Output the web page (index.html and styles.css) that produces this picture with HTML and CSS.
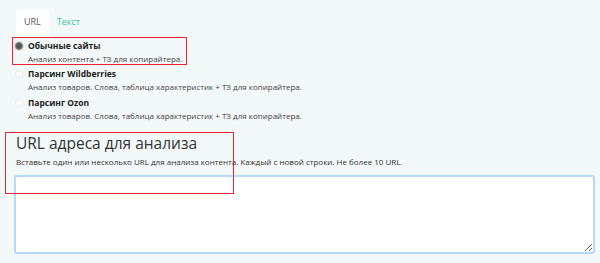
FILE: index.html
```html
<!DOCTYPE html>
<html lang="ru">

<head>
    <meta charset="UTF-8">
    <meta name="viewport" content="width=device-width, initial-scale=1.0">
    <title>Анализ</title>
    <link rel="stylesheet" href="styles.css">
</head>

<body>
    <div class="panel">
        <div class="tabs">
            <span class="tab active">URL</span>
            <span class="tab">Текст</span>
        </div>

        <div class="modes">
            <label class="mode marked">
                <span class="radio checked"></span>
                <span class="mode-text">
                    <b>Обычные сайты</b>
                    <small>Анализ контента + ТЗ для копирайтера.</small>
                </span>
            </label>
            <label class="mode">
                <span class="radio"></span>
                <span class="mode-text">
                    <b>Парсинг Wildberries</b>
                    <small>Анализ товаров. Слова, таблица характеристик + ТЗ для копирайтера.</small>
                </span>
            </label>
            <label class="mode">
                <span class="radio"></span>
                <span class="mode-text">
                    <b>Парсинг Ozon</b>
                    <small>Анализ товаров. Слова, таблица характеристик + ТЗ для копирайтера.</small>
                </span>
            </label>
        </div>

        <div class="urls">
            <div class="urls-head">
                <h2>URL адреса для анализа</h2>
                <p>Вставьте один или несколько URL для анализа контента. Каждый с новой строки. Не более 10 URL.</p>
            </div>
            <div class="marker-box"></div>
            <textarea class="url-input" autofocus></textarea>
        </div>
    </div>
</body>

</html>
```

FILE: styles.css
```css
* {
    margin: 0;
    padding: 0;
    box-sizing: border-box;
}

body {
    width: 600px;
    height: 263px;
    overflow: hidden;
    background-color: #f3f8f9;
    font-family: "Open Sans", "Liberation Sans", sans-serif;
    color: #333;
}

.panel {
    padding: 10px 5px 0 14px;
}

.tabs {
    display: flex;
    margin-left: 2px;
    height: 25px;
}

.tab {
    padding: 0 8px;
    font-size: 9px;
    line-height: 23px;
    color: #3dbfa3;
}

.tab.active {
    background-color: white;
    color: #555;
    border-radius: 3px 3px 0 0;
}

.modes {
    display: flex;
    flex-direction: column;
    gap: 2px;
    margin-top: 3px;
}

.mode {
    display: flex;
    gap: 5px;
    padding: 2px 0 0 1px;
}

.mode.marked {
    width: 173px;
    outline: 1.5px solid #e8242c;
    margin-left: -1px;
    padding-left: 2px;
    height: 26px;
}

.radio {
    flex: none;
    width: 8px;
    height: 8px;
    margin-top: 2px;
    border-radius: 50%;
    background-color: white;
    border: 1px solid #e4e8ea;
}

.radio.checked {
    background-color: #555;
    border-color: #888;
    box-shadow: 0 0 0 1px #ddd;
}

.mode-text {
    display: flex;
    flex-direction: column;
}

.mode-text b {
    font-size: 8.5px;
    line-height: 12px;
    color: #222;
}

.mode-text small {
    font-size: 8px;
    line-height: 13px;
    color: #444;
}

.urls {
    position: relative;
    margin-top: 10px;
}

.urls-head {
    padding-left: 2px;
}

.urls h2 {
    font-weight: normal;
    font-size: 15.5px;
    line-height: 22px;
    color: #333;
}

.urls p {
    font-size: 8px;
    line-height: 12px;
    color: #333;
    margin-top: 2px;
}

.marker-box {
    position: absolute;
    left: -9px;
    top: 0;
    width: 229px;
    height: 62px;
    border: 1.5px solid #e8242c;
    pointer-events: none;
}

.url-input {
    display: block;
    width: 581px;
    height: 79px;
    margin-top: 7px;
    padding: 3px 5px;
    border: 2px solid #b6d9fb;
    border-radius: 3px;
    background-color: white;
    font-family: "Open Sans", sans-serif;
    font-size: 10px;
    outline: none;
    resize: vertical;
}
```
